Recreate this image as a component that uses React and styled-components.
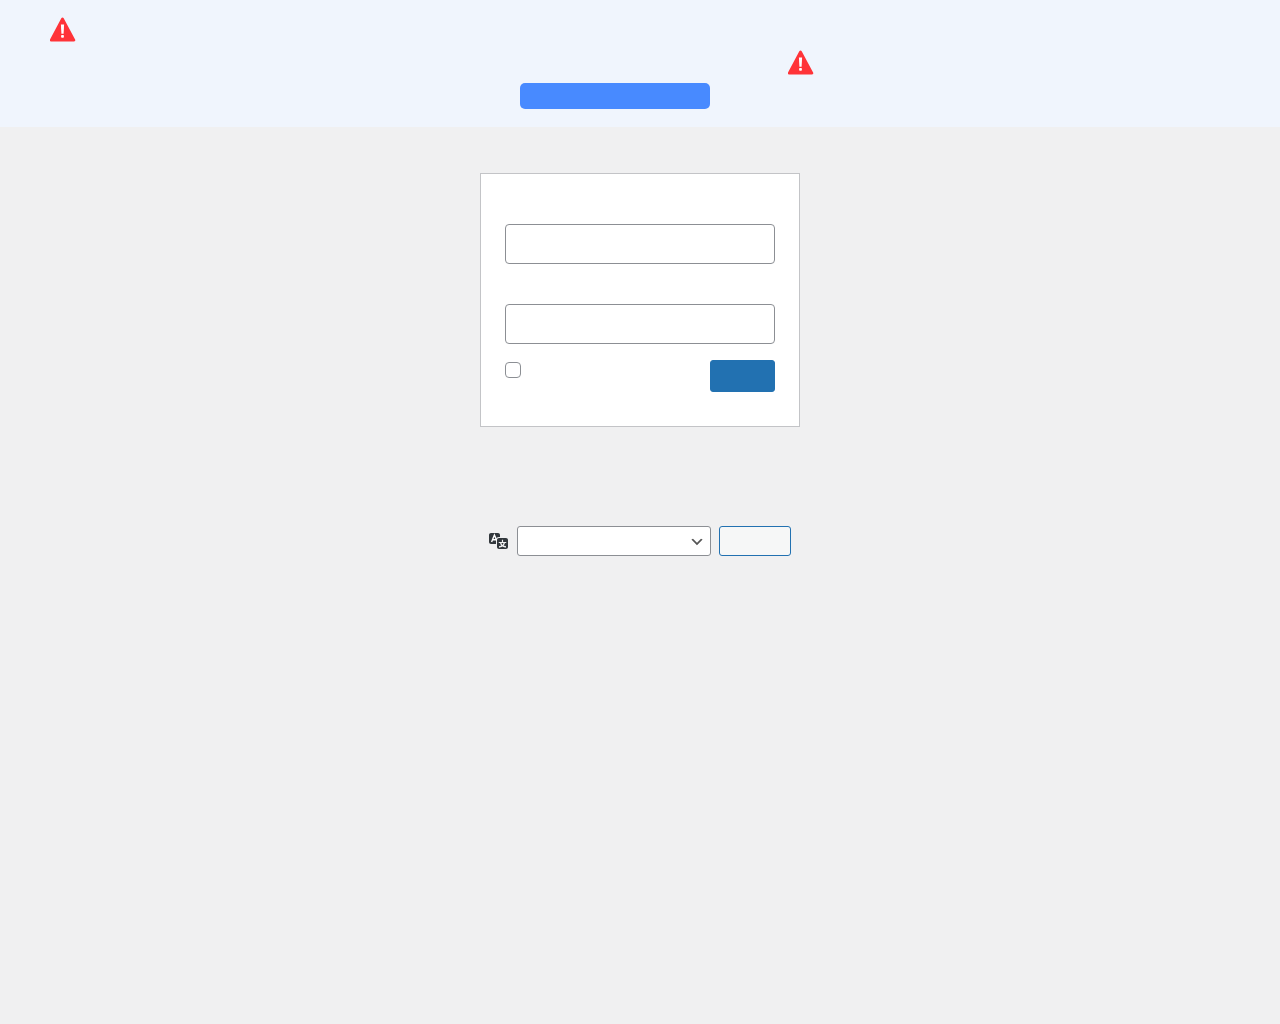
import React from 'react'
import styled, { createGlobalStyle } from 'styled-components'

const GlobalStyle = createGlobalStyle`
body{
    margin: 0;
    background: #f0f0f1;
    font-family: "Open Sans", "Liberation Sans", sans-serif;
    font-size: 13px;
}
`;

const chevron = `url("data:image/svg+xml;charset=US-ASCII,%3Csvg%20width%3D%2220%22%20height%3D%2220%22%20xmlns%3D%22http%3A%2F%2Fwww.w3.org%2F2000%2Fsvg%22%3E%3Cpath%20d%3D%22M5%206l5%205%205-5%202%201-7%207-7-7%202-1z%22%20fill%3D%22%23555%22%2F%3E%3C%2Fsvg%3E")`;

const WarningIcon = () => (
    <WarningSvg viewBox="0.5 0 26 25" aria-hidden="true">
        <path d="M13 0.4c.5 0 .9.3 1.2.8l11.4 21.4c.5.9 0 1.9-1 1.9H1.4c-1 0-1.5-1-1-1.9L11.8 1.2c.3-.5.7-.8 1.2-.8z" fill="#ff3338" />
        <path d="M11.4 7.4h3.2l-.5 9.4h-2.2z" fill="#fff" />
        <rect x="11.6" y="18" width="2.8" height="2.8" rx="0.8" fill="#fff" />
    </WarningSvg>
)

const TranslationIcon = () => (
    <TranslationSvg viewBox="0 0 20 20" aria-hidden="true">
        <path fill="#32373c" d="M2 3h7c1.1 0 2 .9 2 2v2H10c-1.9 0-3 1.1-3 3v4H2c-1.1 0-2-.9-2-2V5c0-1.1.9-2 2-2z" />
        <path fill="none" stroke="#fff" strokeWidth="1.4" d="M2.6 12L5.4 5l2.4 5.6M3.6 9.8h3.4" />
        <path fill="#32373c" d="M10 8h7c1.1 0 2 .9 2 2v7c0 1.1-.9 2-2 2h-7c-1.1 0-2-.9-2-2v-7c0-1.1.9-2 2-2zm7.25 5v-1.08h-3.17V9.75h-1.16v2.17H9.75V13h1.28c.11.85.56 1.85 1.28 2.62-.87.36-1.89.62-2.31.62-.01.02.22.97.2 1.46.84 0 2.21-.5 3.28-1.15 1.09.65 2.48 1.15 3.34 1.15-.02-.49.2-1.44.2-1.46-.43 0-1.49-.27-2.38-.63.7-.77 1.14-1.77 1.25-2.61h1.36zm-3.81 1.93c-.5-.46-.85-1.13-1.01-1.93h2.09c-.17.8-.51 1.47-1 1.93l-.04.03s-.03-.02-.04-.03z" />
    </TranslationSvg>
)

const App = () => {
    return (
        <>
            <GlobalStyle />
            <Banner>
                <BannerRow $indent={50}><WarningIcon /></BannerRow>
                <BannerRow $indent={788}><WarningIcon /></BannerRow>
                <BannerButton type="button" />
            </Banner>
            <Login>
                <Field><TextInput type="text" /></Field>
                <Field><TextInput type="password" /></Field>
                <Submit>
                    <Checkbox type="checkbox" />
                    <PrimaryButton type="button" />
                </Submit>
            </Login>
            <Language>
                <TranslationIcon />
                <LanguageSelect><option></option></LanguageSelect>
                <SecondaryButton type="button" />
            </Language>
        </>
    )
}

const Banner = styled.div`
display: flex;
flex-direction: column;
align-items: flex-start;
height: 127px;
box-sizing: border-box;
padding-top: 17px;
background: #f0f5fd;
`;

const BannerRow = styled.div`
height: 33px;
margin-left: ${props => props.$indent}px;
`;

const WarningSvg = styled.svg`
display: block;
width: 26px;
height: 25px;
`;

const BannerButton = styled.button`
width: 190px;
height: 26px;
margin-left: 520px;
padding: 0;
border: none;
border-radius: 5px;
background: #488aff;
`;

const Login = styled.form`
width: 320px;
box-sizing: border-box;
margin: 46px auto 0;
padding: 26px 24px 34px;
background: #fff;
border: 1px solid #c3c4c7;
`;

const Field = styled.div`
padding-top: 24px;
margin-bottom: 16px;
`;

const TextInput = styled.input`
display: block;
width: 100%;
height: 40px;
box-sizing: border-box;
border: 1px solid #8c8f94;
border-radius: 4px;
background: #fff;
`;

const Submit = styled.div`
display: flex;
justify-content: space-between;
align-items: flex-start;
`;

const Checkbox = styled.input`
appearance: none;
width: 16px;
height: 16px;
margin: 2px 0 0;
border: 1px solid #8c8f94;
border-radius: 4px;
background: #fff;
`;

const PrimaryButton = styled.button`
width: 65px;
height: 32px;
padding: 0;
border: 1px solid #2271b1;
border-radius: 3px;
background: #2271b1;
`;

const Language = styled.div`
display: flex;
justify-content: center;
align-items: center;
gap: 8px;
margin-top: 99px;
`;

const TranslationSvg = styled.svg`
display: block;
width: 20px;
height: 20px;
margin-top: -2px;
`;

const LanguageSelect = styled.select`
appearance: none;
width: 194px;
height: 30px;
box-sizing: border-box;
border: 1px solid #8c8f94;
border-radius: 3px;
background: #fff ${chevron} no-repeat right 5px top 55%;
background-size: 16px 16px;
`;

const SecondaryButton = styled.button`
width: 72px;
height: 30px;
padding: 0;
border: 1px solid #2271b1;
border-radius: 3px;
background: #f6f7f7;
`;

export default App
